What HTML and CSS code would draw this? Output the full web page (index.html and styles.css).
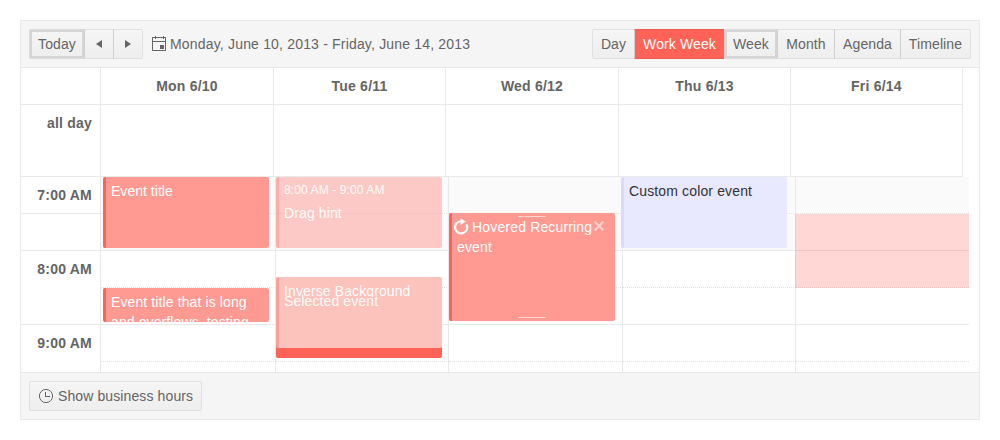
FILE: index.html
```html
<!DOCTYPE html>
<html lang="en">
<head>
<meta charset="utf-8">
<title>Scheduler</title>
<link rel="stylesheet" href="styles.css">
</head>
<body>
<div class="scheduler">
  <header class="toolbar">
    <div class="group">
      <button class="btn today focused">Today</button>
      <button class="btn arrow" aria-label="Previous"><svg width="16" height="16" viewBox="0 0 16 16"><path d="M11 4v8L5 8z"/></svg></button>
      <button class="btn arrow" aria-label="Next"><svg width="16" height="16" viewBox="0 0 16 16"><path d="M5 4v8l6-4z"/></svg></button>
    </div>
    <div class="range">
      <svg width="16" height="16" viewBox="0 0 16 16"><path fill-rule="evenodd" d="M14 1h-1V0h-1v1H5V0H4v1H2c-.6 0-1 .4-1 1v12c0 .6.4 1 1 1h12c.6 0 1-.4 1-1V2c0-.6-.4-1-1-1zm0 13H2V6h12zm0-9H2V2h2v1h1V2h7v1h1V2h1zM9 9h4v4H9z"/></svg>
      <span>Monday, June 10, 2013 - Friday, June 14, 2013</span>
    </div>
    <div class="group views">
      <button class="btn">Day</button>
      <button class="btn selected">Work Week</button>
      <button class="btn focused">Week</button>
      <button class="btn">Month</button>
      <button class="btn">Agenda</button>
      <button class="btn">Timeline</button>
    </div>
  </header>
  <div class="head">
    <span></span><b>Mon 6/10</b><b>Tue 6/11</b><b>Wed 6/12</b><b>Thu 6/13</b><b>Fri 6/14</b>
    <b class="label">all day</b><span></span><span></span><span></span><span></span><span></span>
  </div>
  <div class="content">
    <div class="times">
      <b>7:00 AM</b><b></b><b>8:00 AM</b><b></b><b>9:00 AM</b><b></b>
    </div>
    <div class="slots">
      <i class="off"></i><i class="off"></i><i class="off"></i><i class="off"></i><i class="off"></i>
      <i class="off"></i><i class="off"></i><i class="off"></i><i class="off"></i><i></i>
      <i></i><i></i><i></i><i></i><i></i>
      <i></i><i></i><i></i><i></i><i></i>
      <i></i><i></i><i></i><i></i><i></i>
      <i></i><i></i><i></i><i></i><i></i>
      <div class="slot-selection"></div>
      <div class="event first">Event title</div>
      <div class="event long">Event title that is long and overflows, testing</div>
      <div class="event drag-hint"><small>8:00 AM - 9:00 AM</small><span>Drag hint</span></div>
      <div class="event active"></div>
      <div class="event inverse"><span>Inverse Background</span></div>
      <div class="active-title">Selected event</div>
      <div class="event hovered">
        <span class="handle top"></span>
        <svg class="recur" width="16" height="16" viewBox="0 0 16 16"><path d="M13.400 5.200A6.100 6.100 0 1 1 8 2.200" fill="none" stroke="currentColor" stroke-width="2.100"/><path d="M7.600 -.8l5 3.400-5 3.400z" fill="currentColor"/></svg>
        Hovered Recurring event
        <svg class="close" width="10" height="10" viewBox="0 0 10 10"><path d="M.7.7l8.600 8.600M9.300.7L.7 9.300" stroke="currentColor" stroke-width="2.200"/></svg>
        <span class="handle bottom"></span>
      </div>
      <div class="event custom">Custom color event</div>
    </div>
  </div>
  <footer class="footer">
    <button class="btn hours"><svg width="16" height="16" viewBox="0 0 16 16"><circle cx="8" cy="8" r="6.600" fill="none" stroke="currentColor"/><path d="M7 4h1v4h4v1H7z"/></svg>Show business hours</button>
  </footer>
</div>
</body>
</html>
```
FILE: styles.css
```css
* { box-sizing: border-box; }
body {
  margin: 0;
  padding: 20px;
  background: #fff;
  color: #656565;
  font: 14px/20px "Liberation Sans", Arial, sans-serif;
}
svg { display: block; fill: currentColor; flex: none; }
b { letter-spacing: .22px; }
.scheduler {
  width: 960px;
  height: 400px;
  border: 1px solid #e9e9e9;
  display: flex;
  flex-direction: column;
}
.toolbar {
  height: 47px;
  flex: none;
  display: flex;
  align-items: flex-start;
  padding: 8px;
  background: #f5f5f5;
  border-bottom: 1px solid #e9e9e9;
}
.group { display: flex; }
.views {
  margin-left: auto;
  display: grid;
  grid-template-columns: 42px 90px 53px 57px 66px 71px;
}
.btn {
  height: 30px;
  padding: 0 8px;
  border: 1px solid #e0e0e0;
  background: linear-gradient(#f5f5f5, #eeeeee);
  color: inherit;
  font: inherit;
  letter-spacing: .11px;
  display: flex;
  align-items: center;
  justify-content: center;
  white-space: nowrap;
}
.group .btn + .btn { border-left-color: #cfcfcf; }
.group .btn:not(:last-child) { margin-right: -1px; }
.group .btn:first-child { border-radius: 2px 0 0 2px; }
.group .btn:last-child { border-radius: 0 2px 2px 0; }
.views .btn { padding: 0; }
.today { width: 56px; padding: 0; }
.btn.arrow { width: 30px; padding: 0; }
.btn.focused { box-shadow: inset 0 0 0 2px #d5d5d5; border-color: #dadada; }
.btn.selected { background: #ff6358; color: #fff; border-color: #f25e54; }
.range {
  display: flex;
  align-items: center;
  gap: 3px;
  height: 30px;
  margin-left: 8px;
  letter-spacing: .18px;
}
.head {
  flex: none;
  display: grid;
  grid-template-columns: 80px 173px 172px 173px 172px 172px;
  grid-template-rows: 37px 72px;
}
.head > * {
  border-right: 1px solid #e9e9e9;
  border-bottom: 1px solid #e9e9e9;
  text-align: center;
  padding-top: 8px;
}
.head .label { text-align: right; padding-right: 8px; }
.content {
  flex: none;
  height: 195px;
  overflow: hidden;
  display: flex;
}
.times {
  width: 80px;
  display: grid;
  grid-template-rows: 37px 37px 37px 37px 37px 37px;
  text-align: right;
  border-right: 1px solid #e9e9e9;
}
.times b { padding: 8px 8px 0 0; }
.times b:nth-child(even), .times b:first-child { border-bottom: 1px solid #e9e9e9; }
.slots {
  position: relative;
  display: grid;
  grid-template-columns: 175px 173px 174px 173px 173px;
  grid-template-rows: 37px 37px 37px 37px 37px 37px;
  letter-spacing: .11px;
}
.slots i { border-right: 1px solid #e9e9e9; border-bottom: 1px dotted #e2e2e2; }
.slots i:nth-of-type(5n) { border-right: 0; }
.slots i:nth-of-type(n+6):nth-of-type(-n+10),
.slots i:nth-of-type(n+16):nth-of-type(-n+20) { border-bottom: 1px solid #e9e9e9; }
.off { background: #fafafa; }
.slot-selection {
  position: absolute;
  left: 694px;
  top: 37px;
  width: 174px;
  height: 74px;
  background: rgba(255, 99, 88, .25);
}
.event {
  position: absolute;
  width: 166px;
  height: 71px;
  padding: 4px 8px 0 5px;
  border-left: 3px solid #ff6358;
  border-radius: 2px;
  background: #ff9a93;
  color: #fff;
  overflow: hidden;
}
.first { left: 2px; top: 0; letter-spacing: .03px; }
.long { left: 2px; top: 111px; height: 34px; }
.drag-hint { left: 175px; top: 0; opacity: .5; padding-top: 3px; }
.drag-hint small { display: block; font-size: 12px; line-height: 20px; margin-bottom: 3px; }
.drag-hint span { display: block; }
.active { left: 175px; top: 110px; background: #ff6358; }
.inverse { left: 175px; top: 100px; background: #fbc3bc; border-color: #f9a198; }
.inverse span { display: block; height: 16px; overflow: hidden; opacity: .95; }
.active-title {
  position: absolute;
  left: 183px;
  top: 114px;
  color: rgba(255, 255, 255, .95);
}
.hovered { left: 348px; top: 36px; height: 108px; padding-right: 0; letter-spacing: .16px; }
.recur { display: inline-block; vertical-align: top; margin: 2px -1px 0 -4px; overflow: visible; }
.close { position: absolute; right: 11px; top: 8px; opacity: .55; }
.handle { position: absolute; left: 66px; width: 28px; height: 1px; background: #fff; opacity: .6; }
.handle.top { top: 3px; }
.handle.bottom { bottom: 3px; }
.custom { left: 520px; top: 0; background: #e8e8ff; border-color: #dadaff; color: #333; letter-spacing: .14px; }
.footer {
  flex: 1;
  padding: 8px;
  background: #f5f5f5;
  border-top: 1px solid #e9e9e9;
}
.hours { width: 173px; gap: 4px; border-radius: 2px; justify-content: flex-start; }
```
